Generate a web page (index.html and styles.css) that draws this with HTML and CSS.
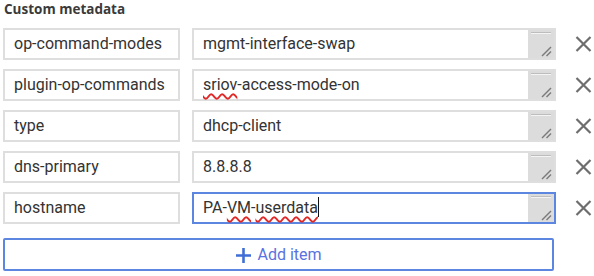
FILE: index.html
```html
<!DOCTYPE html>
<html lang="en">
<head>
  <meta charset="UTF-8">
  <meta name="viewport" content="width=device-width, initial-scale=1.0">
  <title>Custom metadata</title>
  <link rel="stylesheet" href="styles.css">
</head>
<body>

  <!-- Metadata editor -->
  <div class="metadata">
    <h2 class="metadata-title">Custom metadata</h2>

    <div class="meta-row">
      <div class="field key">op-command-modes</div>
      <div class="field value">
        <span class="value-text">mgmt-interface-swap</span>
        <span class="grip"><svg width="26" height="28" viewBox="0 0 26 28"><rect x="0" y="0" width="26" height="28" fill="#dcdcdc"/><line x1="3" y1="2.5" x2="23" y2="2.5" stroke="#bdbdbd" stroke-width="1"/><line x1="3" y1="3.5" x2="23" y2="3.5" stroke="#f4f4f4" stroke-width="1"/><line x1="14" y1="26" x2="23" y2="17" stroke="#7a7a7a" stroke-width="1.5"/><line x1="18.5" y1="26" x2="23" y2="21.5" stroke="#7a7a7a" stroke-width="1.5"/></svg></span>
      </div>
      <button class="remove" aria-label="Remove"><svg width="17" height="16" viewBox="0 0 17 16"><path d="M1.5 1L15.5 15M15.5 1L1.5 15" stroke="#6e6e6e" stroke-width="2.2"/></svg></button>
    </div>

    <div class="meta-row">
      <div class="field key">plugin-op-commands</div>
      <div class="field value">
        <span class="value-text"><span class="misspelt">sriov</span>-access-mode-on</span>
        <span class="grip"><svg width="26" height="28" viewBox="0 0 26 28"><rect x="0" y="0" width="26" height="28" fill="#dcdcdc"/><line x1="3" y1="2.5" x2="23" y2="2.5" stroke="#bdbdbd" stroke-width="1"/><line x1="3" y1="3.5" x2="23" y2="3.5" stroke="#f4f4f4" stroke-width="1"/><line x1="14" y1="26" x2="23" y2="17" stroke="#7a7a7a" stroke-width="1.5"/><line x1="18.5" y1="26" x2="23" y2="21.5" stroke="#7a7a7a" stroke-width="1.5"/></svg></span>
      </div>
      <button class="remove" aria-label="Remove"><svg width="17" height="16" viewBox="0 0 17 16"><path d="M1.5 1L15.5 15M15.5 1L1.5 15" stroke="#6e6e6e" stroke-width="2.2"/></svg></button>
    </div>

    <div class="meta-row">
      <div class="field key">type</div>
      <div class="field value">
        <span class="value-text">dhcp-client</span>
        <span class="grip"><svg width="26" height="28" viewBox="0 0 26 28"><rect x="0" y="0" width="26" height="28" fill="#dcdcdc"/><line x1="3" y1="2.5" x2="23" y2="2.5" stroke="#bdbdbd" stroke-width="1"/><line x1="3" y1="3.5" x2="23" y2="3.5" stroke="#f4f4f4" stroke-width="1"/><line x1="14" y1="26" x2="23" y2="17" stroke="#7a7a7a" stroke-width="1.5"/><line x1="18.5" y1="26" x2="23" y2="21.5" stroke="#7a7a7a" stroke-width="1.5"/></svg></span>
      </div>
      <button class="remove" aria-label="Remove"><svg width="17" height="16" viewBox="0 0 17 16"><path d="M1.5 1L15.5 15M15.5 1L1.5 15" stroke="#6e6e6e" stroke-width="2.2"/></svg></button>
    </div>

    <div class="meta-row">
      <div class="field key">dns-primary</div>
      <div class="field value">
        <span class="value-text">8.8.8.8</span>
        <span class="grip"><svg width="26" height="28" viewBox="0 0 26 28"><rect x="0" y="0" width="26" height="28" fill="#dcdcdc"/><line x1="3" y1="2.5" x2="23" y2="2.5" stroke="#bdbdbd" stroke-width="1"/><line x1="3" y1="3.5" x2="23" y2="3.5" stroke="#f4f4f4" stroke-width="1"/><line x1="14" y1="26" x2="23" y2="17" stroke="#7a7a7a" stroke-width="1.5"/><line x1="18.5" y1="26" x2="23" y2="21.5" stroke="#7a7a7a" stroke-width="1.5"/></svg></span>
      </div>
      <button class="remove" aria-label="Remove"><svg width="17" height="16" viewBox="0 0 17 16"><path d="M1.5 1L15.5 15M15.5 1L1.5 15" stroke="#6e6e6e" stroke-width="2.2"/></svg></button>
    </div>

    <div class="meta-row">
      <div class="field key">hostname</div>
      <div class="field value focused">
        <span class="value-text">PA-<span class="misspelt">VM</span>-<span class="misspelt">userdata</span><span class="caret"></span></span>
        <span class="grip"><svg width="26" height="28" viewBox="0 0 26 28"><rect x="0" y="0" width="26" height="28" fill="#dcdcdc"/><line x1="3" y1="2.5" x2="23" y2="2.5" stroke="#bdbdbd" stroke-width="1"/><line x1="3" y1="3.5" x2="23" y2="3.5" stroke="#f4f4f4" stroke-width="1"/><line x1="14" y1="26" x2="23" y2="17" stroke="#7a7a7a" stroke-width="1.5"/><line x1="18.5" y1="26" x2="23" y2="21.5" stroke="#7a7a7a" stroke-width="1.5"/></svg></span>
      </div>
      <button class="remove" aria-label="Remove"><svg width="17" height="16" viewBox="0 0 17 16"><path d="M1.5 1L15.5 15M15.5 1L1.5 15" stroke="#6e6e6e" stroke-width="2.2"/></svg></button>
    </div>

    <button class="add-item">
      <svg width="17" height="17" viewBox="0 0 17 17"><path d="M8.5 1V16M1 8.5H16" stroke="#3f6fd6" stroke-width="2.6"/></svg>
      <span>Add item</span>
    </button>
  </div>

</body>
</html>
```

FILE: styles.css
```css
/* Reset and Global Styles */
* { margin: 0; padding: 0; box-sizing: border-box; }
html, body {
  background: #fff;
  font-family: Roboto, Arial, sans-serif;
  color: #333;
}

/* Metadata block */
.metadata {
  padding-left: 3px;
}
.metadata-title {
  font-family: "Open Sans", Arial, sans-serif;
  font-size: 13.5px;
  font-weight: 700;
  color: #3a3a3a;
  line-height: 18px;
  padding-left: 1px;
  margin-bottom: 10px;
}

/* Rows */
.meta-row {
  display: flex;
  align-items: center;
  gap: 12px;
  height: 32px;
  margin-bottom: 9px;
}
.field {
  height: 32px;
  border: 2px solid #dedede;
  font-size: 16px;
  line-height: 28px;
  white-space: nowrap;
}
.field.key {
  width: 177px;
  padding-left: 9px;
}
.field.value {
  width: 364px;
  display: flex;
  justify-content: space-between;
  padding-left: 9px;
}
.field.focused {
  border: 2px solid #5d86e0;
}
.grip {
  display: block;
  height: 28px;
  width: 26px;
}
.grip svg { display: block; }
.misspelt {
  text-decoration: underline wavy #e02828;
  text-decoration-thickness: 1.5px;
  text-underline-offset: 3px;
}
.caret {
  display: inline-block;
  width: 1px;
  height: 20px;
  background: #111;
  vertical-align: -4px;
}

/* Remove button */
.remove {
  background: none;
  border: none;
  width: 17px;
  height: 16px;
  margin-left: 7px;
  cursor: pointer;
}
.remove svg { display: block; }

/* Add item button */
.add-item {
  width: 551px;
  height: 33px;
  margin-top: 14px;
  border: 2px solid #5d86e0;
  border-radius: 2px;
  background: #fff;
  display: flex;
  align-items: center;
  justify-content: center;
  gap: 5px;
  font-family: Roboto, Arial, sans-serif;
  font-size: 16px;
  color: #5a72df;
  cursor: pointer;
}
.add-item svg { display: block; margin-top: 1px; }
```
